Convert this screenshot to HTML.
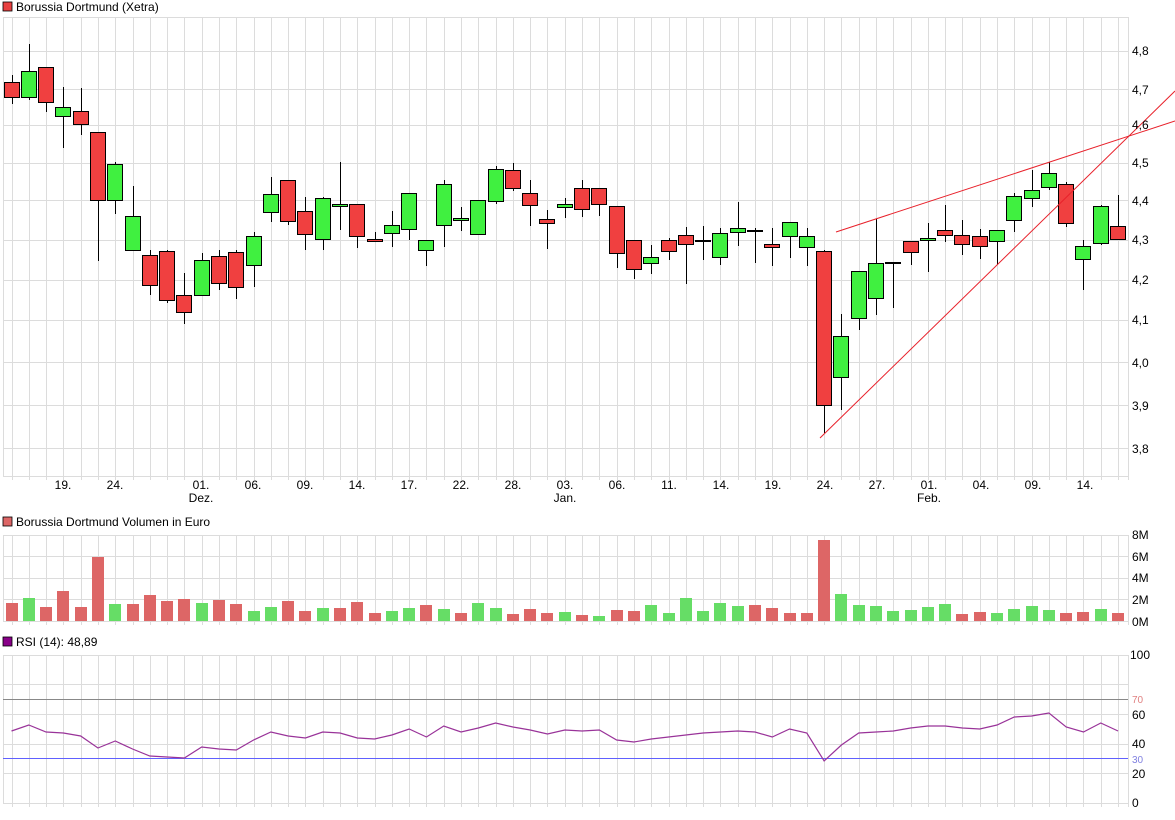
<!DOCTYPE html>
<html><head><meta charset="utf-8"><style>
body{margin:0;background:#fff;width:1175px;height:815px;overflow:hidden;font-family:"Liberation Sans",sans-serif}
svg text{font-family:"Liberation Sans",sans-serif;font-size:12px;fill:#000}
</style></head><body>
<svg id="s" width="1175" height="815" viewBox="0 0 1175 815" xmlns="http://www.w3.org/2000/svg">
<g id="grid" stroke="#dcdcdc" stroke-width="1" shape-rendering="crispEdges"></g>
<g id="c" shape-rendering="crispEdges"></g>
<rect x="3" y="2" width="9" height="9" fill="#e84040" stroke="#000" stroke-width="0.8"/>
<text x="16" y="11">Borussia Dortmund (Xetra)</text>
<rect x="3" y="517" width="9" height="9" fill="#dd6666" stroke="#000" stroke-width="0.8"/>
<text x="16" y="526">Borussia Dortmund Volumen in Euro</text>
<rect x="3" y="637" width="9" height="9" fill="#880088" stroke="#000" stroke-width="0.8"/>
<text x="16" y="646">RSI (14): 48,89</text>
<g>
<text x="1132" y="55">4,8</text><text x="1132" y="94">4,7</text><text x="1132" y="129">4,6</text><text x="1132" y="167">4,5</text><text x="1132" y="205">4,4</text><text x="1132" y="244">4,3</text><text x="1132" y="284">4,2</text><text x="1132" y="324">4,1</text><text x="1132" y="367">4,0</text><text x="1132" y="410">3,9</text><text x="1132" y="453">3,8</text>
<text x="1132" y="539">8M</text><text x="1132" y="561">6M</text><text x="1132" y="582">4M</text><text x="1132" y="604">2M</text><text x="1132" y="626">0M</text>
<text x="1130" y="659">100</text><text x="1132" y="719">60</text><text x="1132" y="748">40</text><text x="1132" y="778">20</text><text x="1132" y="807">0</text>
<text x="1132" y="703" style="fill:#e08080;font-size:10px">70</text><text x="1132" y="763" style="fill:#8080e0;font-size:10px">30</text>
</g>
<g text-anchor="middle">
<text x="63" y="489">19.</text><text x="115" y="489">24.</text><text x="201" y="489">01.</text><text x="201" y="502">Dez.</text><text x="253" y="489">06.</text><text x="305" y="489">09.</text><text x="357" y="489">14.</text><text x="409" y="489">17.</text><text x="461" y="489">22.</text><text x="513" y="489">28.</text><text x="565" y="489">03.</text><text x="565" y="502">Jan.</text><text x="617" y="489">06.</text><text x="669" y="489">11.</text><text x="721" y="489">14.</text><text x="773" y="489">19.</text><text x="825" y="489">24.</text><text x="877" y="489">27.</text><text x="929" y="489">01.</text><text x="929" y="502">Feb.</text><text x="981" y="489">04.</text><text x="1033" y="489">09.</text><text x="1085" y="489">14.</text>
</g>
</svg>
<script>
var NS="http://www.w3.org/2000/svg",g=document.getElementById("grid"),c=document.getElementById("c");
function el(p,t,a){var e=document.createElementNS(NS,t);for(var k in a)e.setAttribute(k,a[k]);p.appendChild(e);return e}
function X(i){return 11.5+17.29*i}
// grid
var panels=[[17,476],[535,621],[655,803]];
panels.forEach(function(p){
 for(var i=0;i<65;i++){var x=Math.round(X(i))+.5;el(g,"line",{x1:x,x2:x,y1:p[0],y2:p[1]+4})}
 el(g,"line",{x1:3.5,x2:3.5,y1:p[0],y2:p[1]});el(g,"line",{x1:1128.5,x2:1128.5,y1:p[0],y2:p[1]+4});
 el(g,"line",{x1:3,x2:1128,y1:p[0]+.5,y2:p[0]+.5});el(g,"line",{x1:3,x2:1128,y1:p[1]+.5,y2:p[1]+.5});
});
[51,89,125,163,200,240,280,320,362,405,448].forEach(function(y){el(g,"line",{x1:3,x2:1128,y1:y+.5,y2:y+.5})});
[556,578,599].forEach(function(y){el(g,"line",{x1:3,x2:1128,y1:y+.5,y2:y+.5})});
[684,714,744,773].forEach(function(y){el(g,"line",{x1:3,x2:1128,y1:y+.5,y2:y+.5})});
// candles: [color, bodyTop, bodyBot, wickTop, wickBot]
var C=[["r",82,97,75,104],["g",71,97,44,100],["r",67,102,67,112],["g",107,116,87,148],["r",111,124,88,135],["r",132,200,132,261],["g",164,200,162,214],["g",216,250,186,250],["r",255,285,250,295],["r",251,300,250,303],["r",295,312,273,324],["g",260,295,253,295],["r",256,283,250,290],["r",252,287,250,299],["g",236,265,232,287],["g",194,212,177,222],["r",180,221,180,225],["r",211,234,197,250],["g",198,239,197,250],["g",204,206,162,230],["r",204,236,204,248],["r",239,241,232,242],["g",225,233,211,247],["g",193,229,193,240],["g",240,250,240,266],["g",184,225,180,247],["g",218,220,207,231],["g",200,234,200,234],["g",169,201,166,204],["r",170,188,163,191],["r",193,205,180,226],["r",219,223,210,249],["g",204,207,198,218],["r",188,209,180,217],["r",188,204,188,216],["r",206,253,206,268],["r",240,269,240,279],["g",257,263,245,274],["r",240,251,238,260],["r",235,244,227,284],["d",240,241,226,260],["g",233,257,228,265],["g",228,232,202,246],["d",230,231,228,263],["r",244,247,228,266],["g",222,236,222,258],["g",236,247,228,266],["r",251,405,250,433],["g",336,377,314,410],["g",271,318,271,330],["g",263,298,219,315],["d",262,263,262,308],["r",241,252,241,265],["g",238,240,223,272],["r",230,235,205,242],["r",235,244,220,255],["r",236,246,229,259],["g",230,241,230,265],["g",196,220,193,232],["g",190,198,170,207],["g",173,187,162,190],["r",184,223,182,227],["g",246,259,240,290],["g",206,243,205,245],["r",226,239,195,240]];
C.forEach(function(d,i){var x=Math.round(X(i));
 el(c,"line",{x1:x+.5,x2:x+.5,y1:d[3],y2:d[4],stroke:"#000"});
 if(d[0]=="d"){el(c,"rect",{x:x-8,y:d[1],width:16,height:2,fill:"#000"});return}
 el(c,"rect",{x:x-7.5,y:d[1]+.5,width:15,height:Math.max(1,d[2]-d[1]),fill:d[0]=="r"?"#f04040":"#40f040",stroke:"#000"});
});
// volume
var V=[[603,"r"],[598,"g"],[607,"r"],[591,"r"],[607,"r"],[557,"r"],[604,"g"],[604,"r"],[595,"r"],[601,"r"],[599,"r"],[603,"g"],[600,"r"],[604,"r"],[611,"g"],[607,"g"],[601,"r"],[611,"r"],[608,"g"],[608,"r"],[602,"r"],[613,"r"],[611,"g"],[608,"g"],[605,"r"],[609,"g"],[613,"r"],[603,"g"],[608,"g"],[614,"r"],[609,"r"],[613,"r"],[612,"g"],[615,"r"],[616,"g"],[610,"r"],[611,"r"],[605,"g"],[613,"g"],[598,"g"],[611,"g"],[603,"g"],[606,"g"],[605,"r"],[608,"r"],[613,"r"],[613,"r"],[540,"r"],[594,"g"],[605,"g"],[606,"g"],[611,"g"],[610,"g"],[607,"g"],[604,"g"],[614,"r"],[612,"r"],[613,"g"],[609,"g"],[606,"g"],[610,"g"],[613,"r"],[612,"r"],[609,"g"],[613,"r"]];
V.forEach(function(v,i){var x=Math.round(X(i));el(c,"rect",{x:x-6,y:v[0],width:12,height:621-v[0],fill:v[1]=="r"?"#dd6666":"#66dd66"})});
// trend lines
el(c,"line",{x1:820,y1:438,x2:1175,y2:91,stroke:"#e8202a","stroke-width":1,"shape-rendering":"auto"});
el(c,"line",{x1:836,y1:232,x2:1175,y2:121,stroke:"#e8202a","stroke-width":1,"shape-rendering":"auto"});
// rsi
el(c,"line",{x1:3,x2:1128,y1:699.5,y2:699.5,stroke:"#888"});
el(c,"line",{x1:3,x2:1128,y1:758.5,y2:758.5,stroke:"#6060ff"});
var R=[731,725,732,733,736,748,741,749,756,757,758,747,749,750,740,732,736,738,732,733,738,739,735,729,737,726,732,728,723,727,730,734,730,731,730,740,742,739,737,735,733,732,731,732,737,729,733,761,745,733,732,731,728,726,726,728,729,725,717,716,713,727,732,723,731];
el(c,"polyline",{points:R.map(function(y,i){return X(i)+","+y}).join(" "),fill:"none",stroke:"#993399","stroke-width":1.2,"shape-rendering":"auto"});
</script>
</body></html>
